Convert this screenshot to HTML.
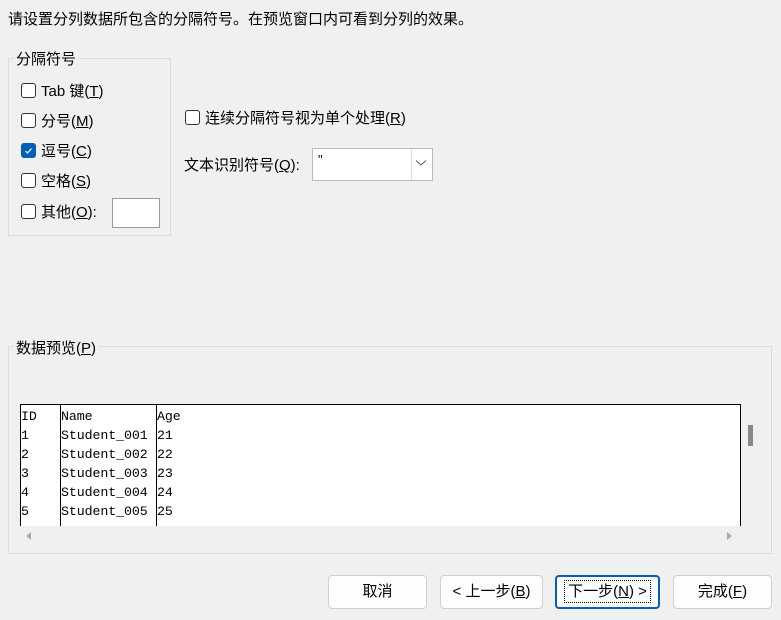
<!DOCTYPE html>
<html><head><meta charset="utf-8"><style>
*{margin:0;padding:0;box-sizing:border-box}
body{width:781px;height:620px;background:#f0f0f0;font-family:"Liberation Sans","Noto Sans CJK SC",sans-serif;font-size:15px;color:#000;position:relative;overflow:hidden}
.a{position:absolute;white-space:nowrap}
.cb{position:absolute;width:15px;height:15px;border:1px solid #333;border-radius:3px;background:#fff}
.cbk{background:#005fb8;border-color:#005fb8}
.grp{position:absolute;border:1px solid #dcdcdc}
.btn{position:absolute;top:575px;height:34px;background:#fdfdfd;border:1px solid #d0d0d0;border-radius:4px;text-align:center;line-height:32px;font-size:15px}
u{text-decoration:underline}
.mono{font-family:"Liberation Mono",monospace;font-size:13.3px;letter-spacing:-0.1px}
</style></head><body>
<div class="a" style="left:8px;top:8px">请设置分列数据所包含的分隔符号。在预览窗口内可看到分列的效果。</div>
<div class="grp" style="left:8px;top:58px;width:163px;height:178px"></div>
<div class="a" style="left:14px;top:48px;background:#f0f0f0;padding:0 2px">分隔符号</div>
<div class="cb" style="left:21px;top:83px"></div><div class="a" style="left:41px;top:80px">Tab 键(<u>T</u>)</div>
<div class="cb" style="left:21px;top:113px"></div><div class="a" style="left:41px;top:110px">分号(<u>M</u>)</div>
<div class="cb cbk" style="left:21px;top:143px"><svg width="13" height="13" style="position:absolute;left:0;top:0"><path d="M3.5 7 L5.5 9 L9.5 4.5" stroke="#fff" stroke-width="1.2" fill="none"/></svg></div><div class="a" style="left:41px;top:140px">逗号(<u>C</u>)</div>
<div class="cb" style="left:21px;top:173px"></div><div class="a" style="left:41px;top:170px">空格(<u>S</u>)</div>
<div class="cb" style="left:21px;top:204px"></div><div class="a" style="left:41px;top:201px">其他(<u>O</u>):</div>
<div class="a" style="left:112px;top:198px;width:48px;height:30px;background:#fff;border:1px solid #999"></div>
<div class="cb" style="left:185px;top:110px"></div><div class="a" style="left:205px;top:107px">连续分隔符号视为单个处理(<u>R</u>)</div>
<div class="a" style="left:184px;top:154px">文本识别符号(<u>Q</u>):</div>
<div class="a" style="left:312px;top:148px;width:121px;height:33px;background:#fff;border:1px solid #bbb"></div>
<div class="a" style="left:411px;top:149px;width:1px;height:31px;background:#ddd"></div>
<div class="a" style="left:318px;top:152px;font-size:13px">"</div>
<svg class="a" style="left:415px;top:159px" width="12" height="8"><path d="M1 1.5 L6 6 L11 1.5" stroke="#555" fill="none"/></svg>
<div class="grp" style="left:8px;top:346px;width:764px;height:208px"></div>
<div class="a" style="left:14px;top:337px;background:#f0f0f0;padding:0 2px">数据预览(<u>P</u>)</div>
<div class="a" style="left:20px;top:404px;width:721px;height:122px;background:#fff;border:1px solid #000;border-bottom:none"></div>
<div class="a" style="left:60px;top:405px;width:1px;height:121px;background:#000"></div>
<div class="a" style="left:156px;top:405px;width:1px;height:121px;background:#000"></div>
<div class="a mono" style="left:21px;top:407px;line-height:19px">ID<br>1<br>2<br>3<br>4<br>5</div>
<div class="a mono" style="left:61px;top:407px;line-height:19px">Name<br>Student_001<br>Student_002<br>Student_003<br>Student_004<br>Student_005</div>
<div class="a mono" style="left:157px;top:407px;line-height:19px">Age<br>21<br>22<br>23<br>24<br>25</div>
<div class="a" style="left:748px;top:425px;width:5px;height:21px;background:#888"></div>
<svg class="a" style="left:25px;top:531px" width="8" height="10"><path d="M6 1 L1 5 L6 9Z" fill="#aaa"/></svg>
<svg class="a" style="left:725px;top:531px" width="8" height="10"><path d="M2 1 L7 5 L2 9Z" fill="#aaa"/></svg>
<div class="btn" style="left:328px;width:99px">取消</div>
<div class="btn" style="left:440px;width:103px">&lt; 上一步(<u>B</u>)</div>
<div class="btn" style="left:555px;width:105px;border:2px solid #005fb8;line-height:30px"><span style="outline:1px dotted #000;padding:2px 3px">下一步(<u>N</u>) &gt;</span></div>
<div class="btn" style="left:673px;width:99px">完成(<u>F</u>)</div>
</body></html>
